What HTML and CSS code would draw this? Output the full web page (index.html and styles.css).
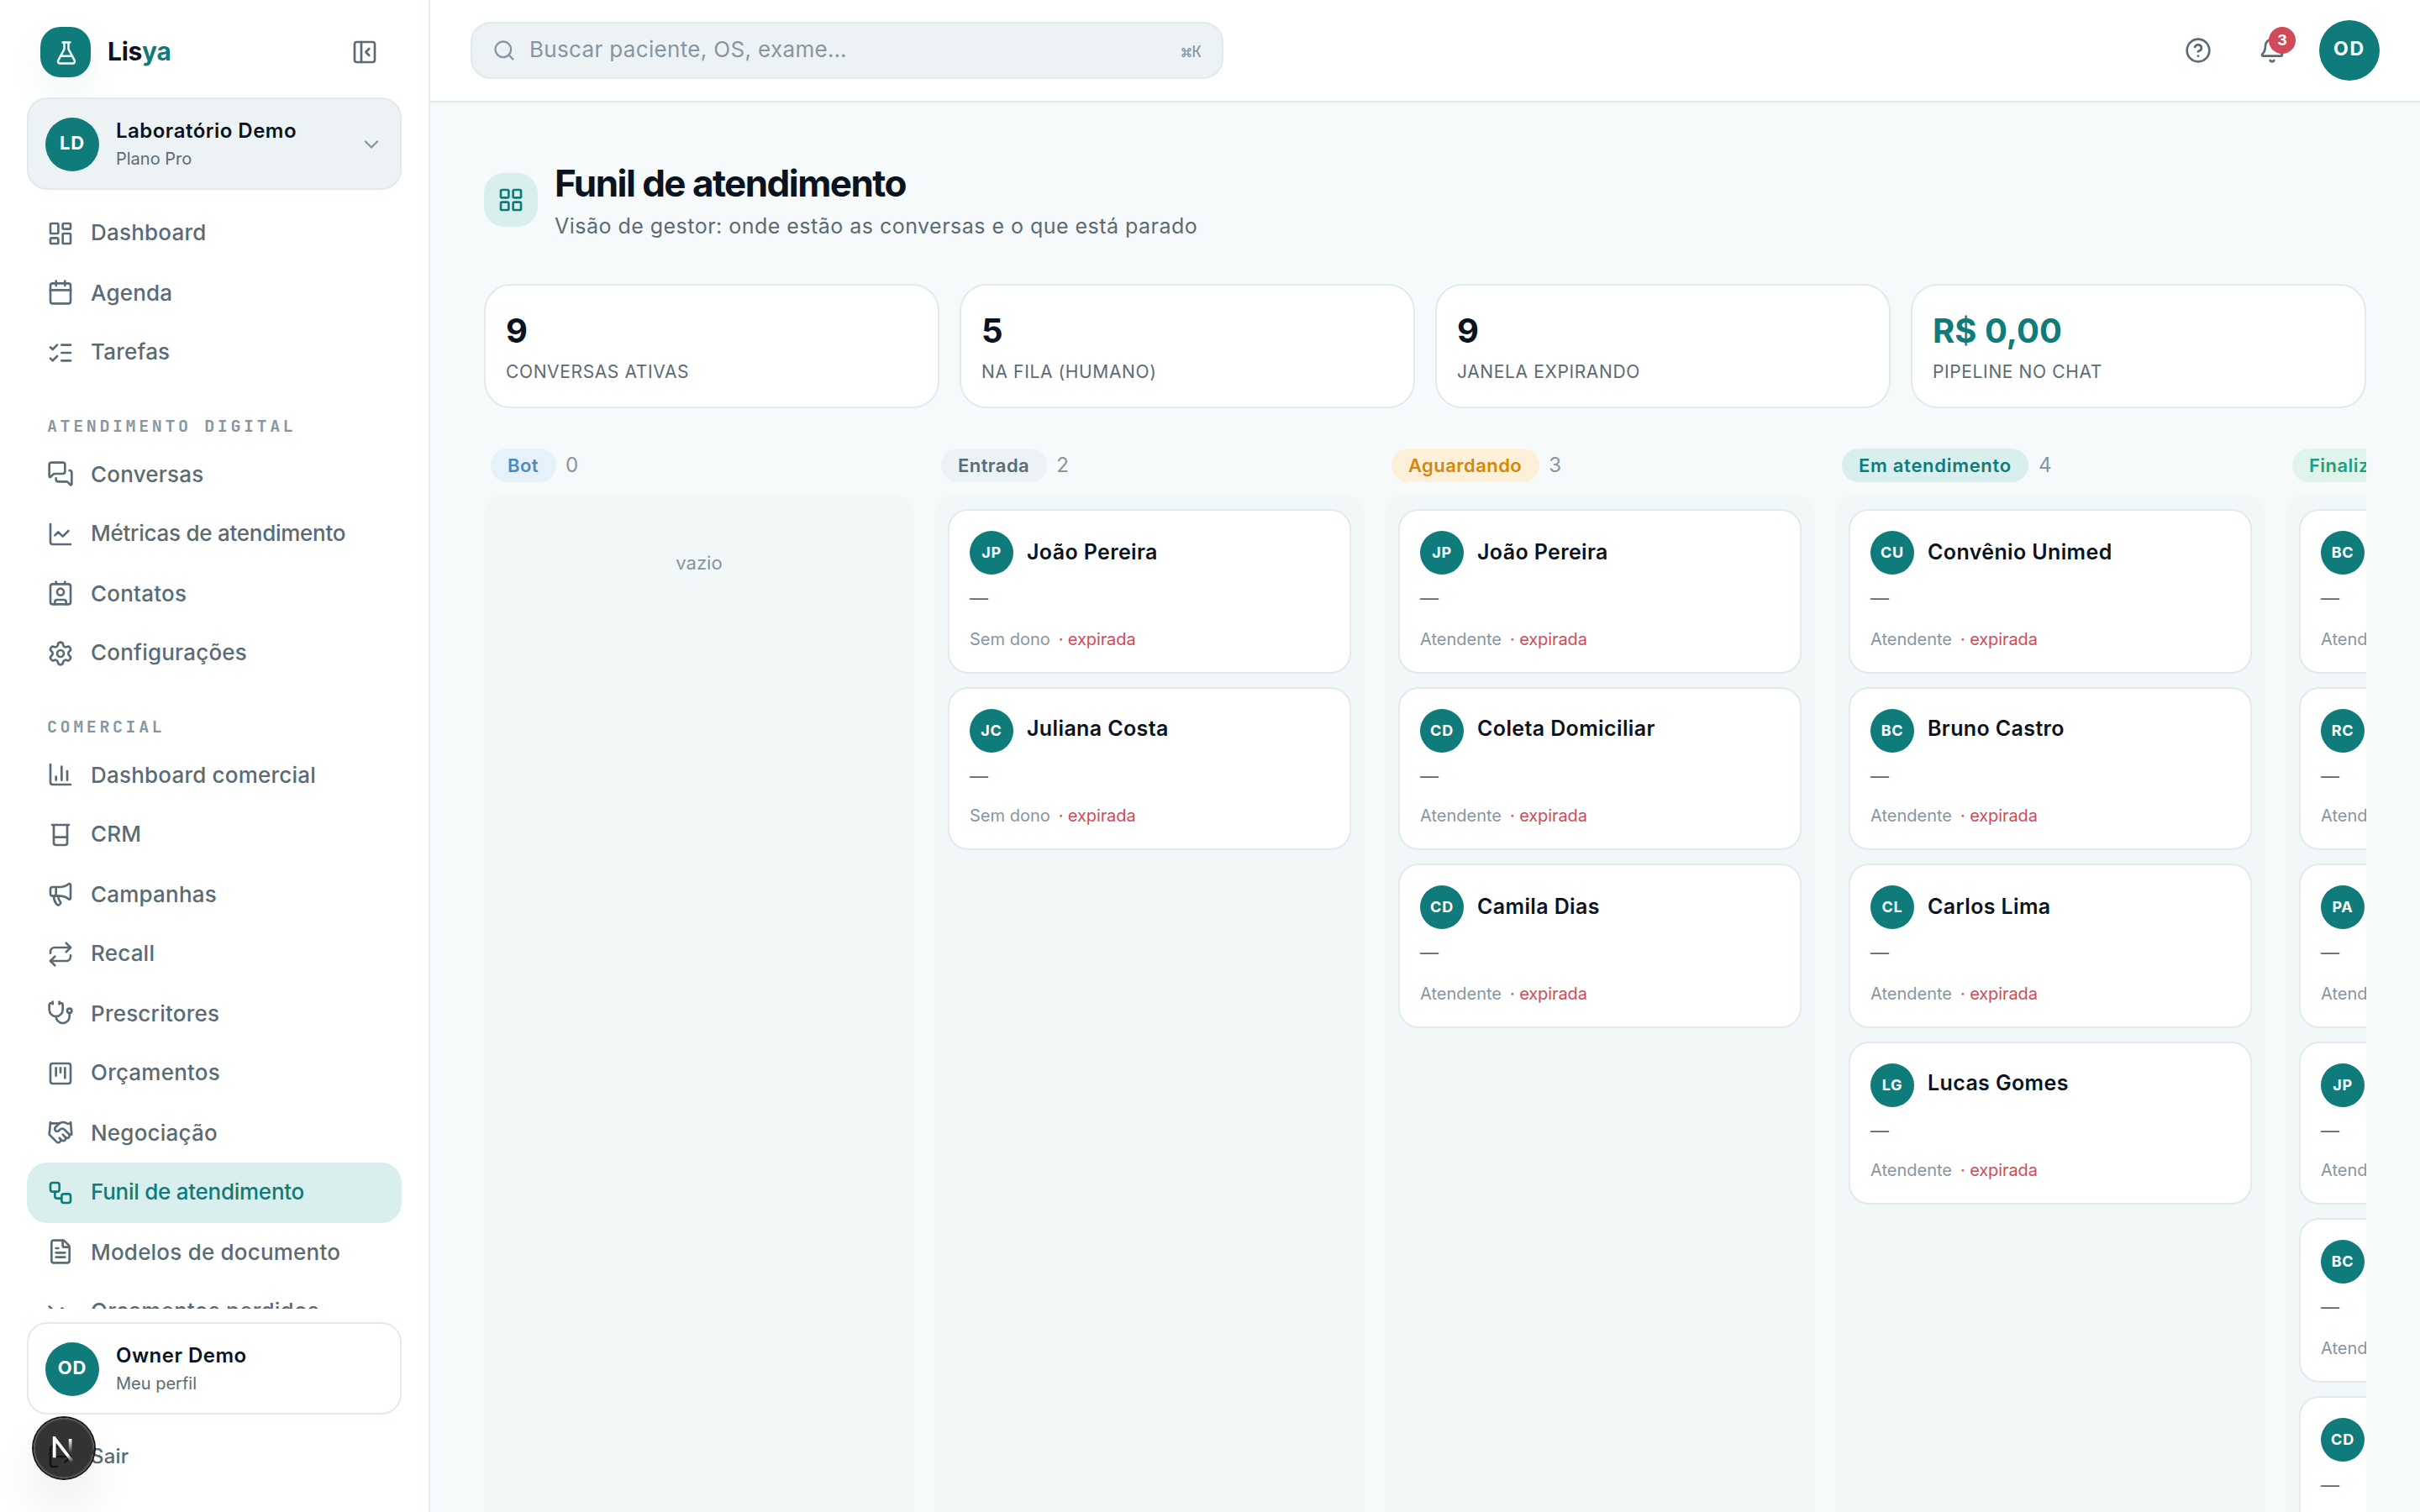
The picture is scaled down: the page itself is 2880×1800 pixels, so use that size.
FILE: index.html
```html
<!DOCTYPE html>
<html lang="pt-BR">
<head>
    <meta charset="UTF-8">
    <meta name="viewport" content="width=device-width, initial-scale=1.0">
    <title>Lisya - Funil de atendimento</title>
    <link rel="stylesheet" href="styles.css">
</head>
<body>
    <div class="app">
        <aside class="sidebar">
            <div class="brand">
                <span class="brand-logo">
                    <svg class="icon" viewBox="0 0 24 24"><path d="M14 2v6a2 2 0 0 0 .245.96l5.51 10.08A2 2 0 0 1 18 22H6a2 2 0 0 1-1.755-2.96l5.51-10.08A2 2 0 0 0 10 8V2"/><path d="M6.453 15h11.094"/><path d="M8.5 2h7"/></svg>
                </span>
                <span class="brand-name">Lis<span>ya</span></span>
                <button type="button" class="collapse-btn">
                    <svg class="icon" viewBox="0 0 24 24"><rect width="18" height="18" x="3" y="3" rx="2"/><path d="M9 3v18"/><path d="m16 15-3-3 3-3"/></svg>
                </button>
            </div>

            <div class="account tenant">
                <span class="avatar">LD</span>
                <div class="account-info">
                    <div class="account-name">Laboratório Demo</div>
                    <div class="account-sub">Plano Pro</div>
                </div>
                <svg class="icon chevron" viewBox="0 0 24 24"><path d="m6 9 6 6 6-6"/></svg>
            </div>

            <nav class="nav">
                <a class="nav-item">
                    <svg class="icon" viewBox="0 0 24 24"><rect width="7" height="9" x="3" y="3" rx="1"/><rect width="7" height="5" x="14" y="3" rx="1"/><rect width="7" height="9" x="14" y="12" rx="1"/><rect width="7" height="5" x="3" y="16" rx="1"/></svg>
                    <span>Dashboard</span>
                </a>
                <a class="nav-item">
                    <svg class="icon" viewBox="0 0 24 24"><path d="M8 2v4"/><path d="M16 2v4"/><rect width="18" height="18" x="3" y="4" rx="2"/><path d="M3 10h18"/></svg>
                    <span>Agenda</span>
                </a>
                <a class="nav-item">
                    <svg class="icon" viewBox="0 0 24 24"><path d="M13 5h8"/><path d="M13 12h8"/><path d="M13 19h8"/><path d="m3 17 2 2 4-4"/><path d="m3 7 2 2 4-4"/></svg>
                    <span>Tarefas</span>
                </a>

                <div class="nav-label">Atendimento digital</div>
                <a class="nav-item">
                    <svg class="icon" viewBox="0 0 24 24"><path d="M16 10a2 2 0 0 1-2 2H6.828a2 2 0 0 0-1.414.586l-2.202 2.202A.71.71 0 0 1 2 14.286V4a2 2 0 0 1 2-2h10a2 2 0 0 1 2 2z"/><path d="M20 9a2 2 0 0 1 2 2v10.286a.71.71 0 0 1-1.212.502l-2.202-2.202A2 2 0 0 0 17.172 19H10a2 2 0 0 1-2-2v-1"/></svg>
                    <span>Conversas</span>
                </a>
                <a class="nav-item nav-item-tight">
                    <svg class="icon" viewBox="0 0 24 24"><path d="M3 3v16a2 2 0 0 0 2 2h16"/><path d="m19 9-5 5-4-4-3 3"/></svg>
                    <span>Métricas de atendimento</span>
                </a>
                <a class="nav-item">
                    <svg class="icon" viewBox="0 0 24 24"><path d="M16 2v2"/><path d="M7 22v-2a2 2 0 0 1 2-2h6a2 2 0 0 1 2 2v2"/><path d="M8 2v2"/><circle cx="12" cy="11" r="3"/><rect width="18" height="18" x="3" y="4" rx="2"/></svg>
                    <span>Contatos</span>
                </a>
                <a class="nav-item">
                    <svg class="icon" viewBox="0 0 24 24"><path d="M9.671 4.136a2.34 2.34 0 0 1 4.659 0 2.34 2.34 0 0 0 3.319 1.915 2.34 2.34 0 0 1 2.33 4.033 2.34 2.34 0 0 0 0 3.831 2.34 2.34 0 0 1-2.33 4.033 2.34 2.34 0 0 0-3.319 1.915 2.34 2.34 0 0 1-4.659 0 2.34 2.34 0 0 0-3.32-1.915 2.34 2.34 0 0 1-2.33-4.033 2.34 2.34 0 0 0 0-3.831A2.34 2.34 0 0 1 6.35 6.051a2.34 2.34 0 0 0 3.319-1.915"/><circle cx="12" cy="12" r="3"/></svg>
                    <span>Configurações</span>
                </a>

                <div class="nav-label">Comercial</div>
                <a class="nav-item">
                    <svg class="icon" viewBox="0 0 24 24"><path d="M3 3v16a2 2 0 0 0 2 2h16"/><path d="M18 17V9"/><path d="M13 17V5"/><path d="M8 17v-3"/></svg>
                    <span>Dashboard comercial</span>
                </a>
                <a class="nav-item">
                    <svg class="icon" viewBox="0 0 24 24"><path d="M4.5 3h15"/><path d="M6 3v16a2 2 0 0 0 2 2h8a2 2 0 0 0 2-2V3"/><path d="M6 14h12"/></svg>
                    <span>CRM</span>
                </a>
                <a class="nav-item">
                    <svg class="icon" viewBox="0 0 24 24"><path d="M11 6a13 13 0 0 0 8.4-2.8A1 1 0 0 1 21 4v12a1 1 0 0 1-1.6.8A13 13 0 0 0 11 14H5a2 2 0 0 1-2-2V8a2 2 0 0 1 2-2z"/><path d="M6 14a12 12 0 0 0 2.4 7.2 2 2 0 0 0 3.2-2.4A8 8 0 0 1 10 14"/><path d="M8 6v8"/></svg>
                    <span>Campanhas</span>
                </a>
                <a class="nav-item">
                    <svg class="icon" viewBox="0 0 24 24"><path d="m17 2 4 4-4 4"/><path d="M3 11v-1a4 4 0 0 1 4-4h14"/><path d="m7 22-4-4 4-4"/><path d="M21 13v1a4 4 0 0 1-4 4H3"/></svg>
                    <span>Recall</span>
                </a>
                <a class="nav-item">
                    <svg class="icon" viewBox="0 0 24 24"><path d="M11 2v2"/><path d="M5 2v2"/><path d="M5 3H4a2 2 0 0 0-2 2v4a6 6 0 0 0 12 0V5a2 2 0 0 0-2-2h-1"/><path d="M8 15a6 6 0 0 0 12 0v-3"/><circle cx="20" cy="10" r="2"/></svg>
                    <span>Prescritores</span>
                </a>
                <a class="nav-item">
                    <svg class="icon" viewBox="0 0 24 24"><rect width="18" height="18" x="3" y="3" rx="2"/><path d="M8 7v7"/><path d="M12 7v4"/><path d="M16 7v9"/></svg>
                    <span>Orçamentos</span>
                </a>
                <a class="nav-item">
                    <svg class="icon" viewBox="0 0 24 24"><path d="m11 17 2 2a1 1 0 1 0 3-3"/><path d="m14 14 2.5 2.5a1 1 0 1 0 3-3l-3.88-3.88a3 3 0 0 0-4.24 0l-.88.88a1 1 0 1 1-3-3l2.81-2.81a5.79 5.79 0 0 1 7.06-.87l.47.28a2 2 0 0 0 1.42.25L21 4"/><path d="m21 3 1 11h-2"/><path d="M3 3 2 14l6.5 6.5a1 1 0 1 0 3-3"/><path d="M3 4h8"/></svg>
                    <span>Negociação</span>
                </a>
                <a class="nav-item nav-item-tight active">
                    <svg class="icon" viewBox="0 0 24 24"><rect width="8" height="8" x="3" y="3" rx="2"/><path d="M7 11v4a2 2 0 0 0 2 2h4"/><rect width="8" height="8" x="13" y="13" rx="2"/></svg>
                    <span>Funil de atendimento</span>
                </a>
                <a class="nav-item">
                    <svg class="icon" viewBox="0 0 24 24"><path d="M6 22a2 2 0 0 1-2-2V4a2 2 0 0 1 2-2h8a2.4 2.4 0 0 1 1.704.706l3.588 3.588A2.4 2.4 0 0 1 20 8v12a2 2 0 0 1-2 2z"/><path d="M14 2v5a1 1 0 0 0 1 1h5"/><path d="M10 9H8"/><path d="M16 13H8"/><path d="M16 17H8"/></svg>
                    <span>Modelos de documento</span>
                </a>
                <a class="nav-item">
                    <svg class="icon" viewBox="0 0 24 24"><path d="M16 17h6v-6"/><path d="m22 17-8.5-8.5-5 5L2 7"/></svg>
                    <span>Orçamentos perdidos</span>
                </a>
            </nav>

            <div class="account profile">
                <span class="avatar">OD</span>
                <div class="account-info">
                    <div class="account-name">Owner Demo</div>
                    <div class="account-sub">Meu perfil</div>
                </div>
            </div>
            <a class="logout">
                <svg class="icon" viewBox="0 0 24 24"><path d="m16 17 5-5-5-5"/><path d="M21 12H9"/><path d="M9 21H5a2 2 0 0 1-2-2V5a2 2 0 0 1 2-2h4"/></svg>
                <span>Sair</span>
            </a>
        </aside>

        <div class="page">
            <header class="topbar">
                <div class="search">
                    <svg class="icon" viewBox="0 0 24 24"><path d="m21 21-4.34-4.34"/><circle cx="11" cy="11" r="8"/></svg>
                    <span class="search-text">Buscar paciente, OS, exame…</span>
                    <span class="search-key">⌘K</span>
                </div>
                <div class="topbar-actions">
                    <button type="button" class="icon-btn">
                        <svg class="icon" viewBox="0 0 24 24"><circle cx="12" cy="12" r="10"/><path d="M9.09 9a3 3 0 0 1 5.83 1c0 2-3 3-3 3"/><path d="M12 17h.01"/></svg>
                    </button>
                    <button type="button" class="icon-btn">
                        <svg class="icon" viewBox="0 0 24 24"><path d="M10.268 21a2 2 0 0 0 3.464 0"/><path d="M3.262 15.326A1 1 0 0 0 4 17h16a1 1 0 0 0 .74-1.673C19.41 13.956 18 12.499 18 8A6 6 0 0 0 6 8c0 4.499-1.411 5.956-2.738 7.326"/></svg>
                        <span class="badge">3</span>
                    </button>
                    <span class="avatar avatar-lg">OD</span>
                </div>
            </header>

            <main class="content">
                <div class="page-header">
                    <span class="page-icon">
                        <svg class="icon" viewBox="0 0 24 24"><rect width="7" height="7" x="3" y="3" rx="1"/><rect width="7" height="7" x="14" y="3" rx="1"/><rect width="7" height="7" x="14" y="14" rx="1"/><rect width="7" height="7" x="3" y="14" rx="1"/></svg>
                    </span>
                    <div>
                        <h1>Funil de atendimento</h1>
                        <p>Visão de gestor: onde estão as conversas e o que está parado</p>
                    </div>
                </div>

                <div class="stats">
                    <div class="stat">
                        <div class="stat-value">9</div>
                        <div class="stat-label">Conversas ativas</div>
                    </div>
                    <div class="stat">
                        <div class="stat-value">5</div>
                        <div class="stat-label">Na fila (humano)</div>
                    </div>
                    <div class="stat">
                        <div class="stat-value">9</div>
                        <div class="stat-label">Janela expirando</div>
                    </div>
                    <div class="stat">
                        <div class="stat-value money">R$ 0,00</div>
                        <div class="stat-label">Pipeline no chat</div>
                    </div>
                </div>

                <div class="board">
                    <section class="column">
                        <div class="column-head"><span class="pill pill-info">Bot</span><span class="count">0</span></div>
                        <div class="column-body">
                            <div class="empty">vazio</div>
                        </div>
                    </section>

                    <section class="column">
                        <div class="column-head"><span class="pill pill-neutral">Entrada</span><span class="count">2</span></div>
                        <div class="column-body">
                            <article class="card">
                                <div class="card-top"><span class="avatar avatar-sm">JP</span><span class="card-name">João Pereira</span></div>
                                <div class="card-preview">—</div>
                                <div class="card-meta"><span>Sem dono</span><span class="expired">· expirada</span></div>
                            </article>
                            <article class="card">
                                <div class="card-top"><span class="avatar avatar-sm">JC</span><span class="card-name">Juliana Costa</span></div>
                                <div class="card-preview">—</div>
                                <div class="card-meta"><span>Sem dono</span><span class="expired">· expirada</span></div>
                            </article>
                        </div>
                    </section>

                    <section class="column">
                        <div class="column-head"><span class="pill pill-warning">Aguardando</span><span class="count">3</span></div>
                        <div class="column-body">
                            <article class="card">
                                <div class="card-top"><span class="avatar avatar-sm">JP</span><span class="card-name">João Pereira</span></div>
                                <div class="card-preview">—</div>
                                <div class="card-meta"><span>Atendente</span><span class="expired">· expirada</span></div>
                            </article>
                            <article class="card">
                                <div class="card-top"><span class="avatar avatar-sm">CD</span><span class="card-name">Coleta Domiciliar</span></div>
                                <div class="card-preview">—</div>
                                <div class="card-meta"><span>Atendente</span><span class="expired">· expirada</span></div>
                            </article>
                            <article class="card">
                                <div class="card-top"><span class="avatar avatar-sm">CD</span><span class="card-name">Camila Dias</span></div>
                                <div class="card-preview">—</div>
                                <div class="card-meta"><span>Atendente</span><span class="expired">· expirada</span></div>
                            </article>
                        </div>
                    </section>

                    <section class="column">
                        <div class="column-head"><span class="pill pill-primary">Em atendimento</span><span class="count">4</span></div>
                        <div class="column-body">
                            <article class="card">
                                <div class="card-top"><span class="avatar avatar-sm">CU</span><span class="card-name">Convênio Unimed</span></div>
                                <div class="card-preview">—</div>
                                <div class="card-meta"><span>Atendente</span><span class="expired">· expirada</span></div>
                            </article>
                            <article class="card">
                                <div class="card-top"><span class="avatar avatar-sm">BC</span><span class="card-name">Bruno Castro</span></div>
                                <div class="card-preview">—</div>
                                <div class="card-meta"><span>Atendente</span><span class="expired">· expirada</span></div>
                            </article>
                            <article class="card">
                                <div class="card-top"><span class="avatar avatar-sm">CL</span><span class="card-name">Carlos Lima</span></div>
                                <div class="card-preview">—</div>
                                <div class="card-meta"><span>Atendente</span><span class="expired">· expirada</span></div>
                            </article>
                            <article class="card">
                                <div class="card-top"><span class="avatar avatar-sm">LG</span><span class="card-name">Lucas Gomes</span></div>
                                <div class="card-preview">—</div>
                                <div class="card-meta"><span>Atendente</span><span class="expired">· expirada</span></div>
                            </article>
                        </div>
                    </section>

                    <section class="column">
                        <div class="column-head"><span class="pill pill-success">Finalizado</span></div>
                        <div class="column-body">
                            <article class="card">
                                <div class="card-top"><span class="avatar avatar-sm">BC</span></div>
                                <div class="card-preview">—</div>
                                <div class="card-meta"><span>Atendente</span></div>
                            </article>
                            <article class="card">
                                <div class="card-top"><span class="avatar avatar-sm">RC</span></div>
                                <div class="card-preview">—</div>
                                <div class="card-meta"><span>Atendente</span></div>
                            </article>
                            <article class="card">
                                <div class="card-top"><span class="avatar avatar-sm">PA</span></div>
                                <div class="card-preview">—</div>
                                <div class="card-meta"><span>Atendente</span></div>
                            </article>
                            <article class="card">
                                <div class="card-top"><span class="avatar avatar-sm">JP</span></div>
                                <div class="card-preview">—</div>
                                <div class="card-meta"><span>Atendente</span></div>
                            </article>
                            <article class="card">
                                <div class="card-top"><span class="avatar avatar-sm">BC</span></div>
                                <div class="card-preview">—</div>
                                <div class="card-meta"><span>Atendente</span></div>
                            </article>
                            <article class="card">
                                <div class="card-top"><span class="avatar avatar-sm">CD</span></div>
                                <div class="card-preview">—</div>
                                <div class="card-meta"><span>Atendente</span></div>
                            </article>
                        </div>
                    </section>
                </div>
            </main>
        </div>

        <div class="dev-badge">
            <svg viewBox="0 0 16 16" fill="none">
                <defs>
                    <linearGradient id="fadeDiagonal" x1="9.96" y1="11.12" x2="15.48" y2="17.97" gradientUnits="userSpaceOnUse">
                        <stop stop-color="#fff"/>
                        <stop offset="0.6" stop-color="#fff" stop-opacity="0"/>
                    </linearGradient>
                    <linearGradient id="fadeStem" x1="11.82" y1="1.4" x2="11.79" y2="9.63" gradientUnits="userSpaceOnUse">
                        <stop stop-color="#fff"/>
                        <stop offset="1" stop-color="#fff" stop-opacity="0"/>
                    </linearGradient>
                </defs>
                <path d="M13.3 15.2 2.34 1v11.6" stroke="url(#fadeDiagonal)" stroke-width="1.86"/>
                <path d="M11.825 1.5v11.6" stroke="url(#fadeStem)" stroke-width="1.86"/>
            </svg>
        </div>
    </div>
</body>
</html>
```
FILE: styles.css
```css
* {
    box-sizing: border-box;
}
html, body {
    margin: 0;
    padding: 0;
}
body {
    height: 1800px;
    font-family: Inter, "Liberation Sans", sans-serif;
    font-size: 13px;
    line-height: 1.5;
    color: #0b1220;
    background: #f6fafb;
}
/* 1440x900 layout shown at 2x */
.app {
    position: relative;
    display: flex;
    width: 1440px;
    height: 900px;
    overflow: hidden;
    background: #f6fafb;
    transform: scale(2);
    transform-origin: 0 0;
}
button {
    border: none;
    background: none;
    padding: 0;
    color: inherit;
    font: inherit;
}
.icon {
    width: 16px;
    height: 16px;
    flex-shrink: 0;
    fill: none;
    stroke: currentColor;
    stroke-width: 2;
    stroke-linecap: round;
    stroke-linejoin: round;
}
.avatar {
    display: flex;
    align-items: center;
    justify-content: center;
    flex-shrink: 0;
    width: 32px;
    height: 32px;
    border-radius: 50%;
    background: #0f7b7a;
    color: #fff;
    font-size: 11px;
    font-weight: 700;
    letter-spacing: 0.04em;
}
.avatar-sm {
    width: 26px;
    height: 26px;
    font-size: 9px;
}
.avatar-lg {
    width: 36px;
    height: 36px;
    margin-left: 2px;
    font-size: 11.5px;
    letter-spacing: 0.08em;
}

/* Sidebar */
.sidebar {
    display: flex;
    flex-direction: column;
    flex-shrink: 0;
    width: 256px;
    padding: 16px;
    background: #fff;
    border-right: 1px solid #e1eaee;
}
.brand {
    display: flex;
    align-items: center;
    gap: 10px;
    height: 30px;
    padding: 0 8px;
    margin-bottom: 12px;
}
.brand-logo {
    display: flex;
    align-items: center;
    justify-content: center;
    width: 30px;
    height: 30px;
    border-radius: 12px;
    background: #0f7b7a;
    color: #fff;
    box-shadow: 0 8px 24px -6px rgba(15, 123, 122, 0.18);
}
.brand-logo .icon {
    width: 15px;
    height: 15px;
}
.brand-name {
    flex: 1;
    font-size: 15px;
    font-weight: 700;
    letter-spacing: -0.01em;
}
.brand-name span {
    color: #0f7b7a;
}
.collapse-btn {
    display: flex;
    align-items: center;
    justify-content: center;
    width: 28px;
    height: 28px;
    color: #5b6b75;
}
.account {
    display: flex;
    align-items: center;
    flex-shrink: 0;
    gap: 10px;
    padding: 10px;
    border: 1px solid #e1eaee;
    border-radius: 12px;
}
.tenant {
    background: #edf3f5;
}
.account-info {
    flex: 1;
}
.account-name {
    font-size: 12px;
    font-weight: 600;
    letter-spacing: 0.02em;
}
.account-sub {
    font-size: 10px;
    color: #5b6b75;
}
.chevron {
    width: 14px;
    height: 14px;
    color: #8696a1;
}
.nav {
    flex: 1;
    min-height: 0;
    margin: 8px 0;
    overflow: hidden;
}
.nav-item, .logout {
    display: flex;
    align-items: center;
    gap: 10px;
    padding: 8px 12px;
    border-radius: 12px;
    font-weight: 500;
    letter-spacing: 0.008em;
    color: #5b6b75;
}
.nav-item-tight {
    letter-spacing: -0.01em;
}
.nav-item.active {
    background: #d9efed;
    color: #0f7b7a;
}
.nav-label {
    padding: 18px 12px 4px;
    font-family: "JetBrains Mono", "Liberation Mono", monospace;
    font-size: 10px;
    font-weight: 600;
    letter-spacing: 0.18em;
    text-transform: uppercase;
    color: #8696a1;
}
.logout {
    margin-top: 8px;
    font-size: 12px;
}

/* Topbar */
.page {
    flex: 1;
    min-width: 0;
}
.topbar {
    display: flex;
    align-items: center;
    justify-content: space-between;
    height: 61px;
    padding: 0 24px;
    background: #fff;
    border-bottom: 1px solid #e1eaee;
}
.search {
    display: flex;
    align-items: center;
    gap: 8px;
    width: 448px;
    height: 34px;
    padding: 0 12px;
    border: 1px solid #e1eaee;
    border-radius: 12px;
    background: #edf3f5;
    color: #8696a1;
}
.search .icon {
    width: 14px;
    height: 14px;
}
.search-text {
    flex: 1;
    letter-spacing: 0.013em;
}
.search-key {
    font-family: "JetBrains Mono", "Liberation Mono", monospace;
    font-size: 10px;
}
.topbar-actions {
    display: flex;
    align-items: center;
    gap: 8px;
}
.icon-btn {
    position: relative;
    display: flex;
    align-items: center;
    justify-content: center;
    width: 36px;
    height: 36px;
    color: #5b6b75;
}
.badge {
    position: absolute;
    top: 4px;
    right: 4px;
    width: 16px;
    height: 16px;
    border-radius: 50%;
    background: #d14a5a;
    color: #fff;
    font-size: 9px;
    font-weight: 700;
    line-height: 16px;
    text-align: center;
}

/* Content */
.content {
    padding: 32px;
}
.page-header {
    display: flex;
    align-items: center;
    gap: 10px;
    margin-bottom: 24px;
}
.page-icon {
    display: flex;
    align-items: center;
    justify-content: center;
    width: 32px;
    height: 32px;
    border-radius: 12px;
    background: #d9efed;
    color: #0f7b7a;
}
h1 {
    margin: 0;
    font-size: 22px;
    font-weight: 700;
    letter-spacing: -0.035em;
}
.page-header p {
    margin: 0;
    font-size: 12.5px;
    letter-spacing: 0.019em;
    color: #5b6b75;
}
.stats {
    display: grid;
    grid-template-columns: repeat(4, 1fr);
    gap: 12px;
    margin-bottom: 24px;
}
.stat {
    padding: 12px;
    background: #fff;
    border: 1px solid #e1eaee;
    border-radius: 16px;
}
.stat-value {
    font-size: 20px;
    font-weight: 700;
}
.stat-value.money {
    color: #0f7b7a;
}
.stat-label {
    margin-top: 2px;
    font-size: 10.5px;
    letter-spacing: 0.03em;
    text-transform: uppercase;
    color: #5b6b75;
}

/* Board */
.board {
    display: flex;
    gap: 12px;
    overflow: hidden;
}
.column {
    display: flex;
    flex-direction: column;
    flex-shrink: 0;
    width: 256px;
}
.column-head {
    display: flex;
    align-items: center;
    gap: 6px;
    height: 20.5px;
    padding: 0 4px;
    margin-bottom: 8px;
}
.pill {
    padding: 2px 10px;
    border-radius: 999px;
    font-size: 11px;
    font-weight: 600;
    letter-spacing: 0.02em;
}
.pill-info {
    background: #e6f1f9;
    color: #4a8dbd;
}
.pill-neutral {
    background: #edf3f5;
    color: #5b6b75;
}
.pill-warning {
    background: #fdf0d9;
    color: #d4870c;
}
.pill-primary {
    background: #d9efed;
    color: #0f7b7a;
    letter-spacing: 0.032em;
}
.pill-success {
    background: #dff5ec;
    color: #1f9f7f;
}
.count {
    font-size: 12px;
    color: #8696a1;
}
.column-body {
    display: flex;
    flex-direction: column;
    flex: 1;
    gap: 8px;
    padding: 8px;
    border-radius: 12px;
    background: #f2f7f8;
}
.empty {
    padding: 24px 0;
    font-size: 11px;
    text-align: center;
    color: #8696a1;
}
.card {
    padding: 12px;
    background: #fff;
    border: 1px solid #e1eaee;
    border-radius: 12px;
}
.card-top {
    display: flex;
    align-items: center;
    gap: 8px;
}
.card-name {
    font-size: 12.5px;
    font-weight: 600;
    letter-spacing: 0.015em;
}
.card-preview {
    margin-top: 6px;
    font-size: 11px;
    color: #5b6b75;
}
.card-meta {
    display: flex;
    gap: 5px;
    margin-top: 8px;
    font-size: 10px;
    color: #8696a1;
}
.expired {
    color: #d14a5a;
    letter-spacing: -0.005em;
}

/* Floating dev tools button */
.dev-badge {
    position: absolute;
    left: 20px;
    bottom: 20px;
    width: 36px;
    height: 36px;
    padding: 11px 10px;
    border-radius: 50%;
    background: rgba(0, 0, 0, 0.8);
    box-shadow: 0 0 0 1px #171717, inset 0 0 0 1px rgba(255, 255, 255, 0.14), 0 16px 32px -8px rgba(0, 0, 0, 0.24);
}
.dev-badge svg {
    display: block;
    width: 16px;
    height: 16px;
}
```
